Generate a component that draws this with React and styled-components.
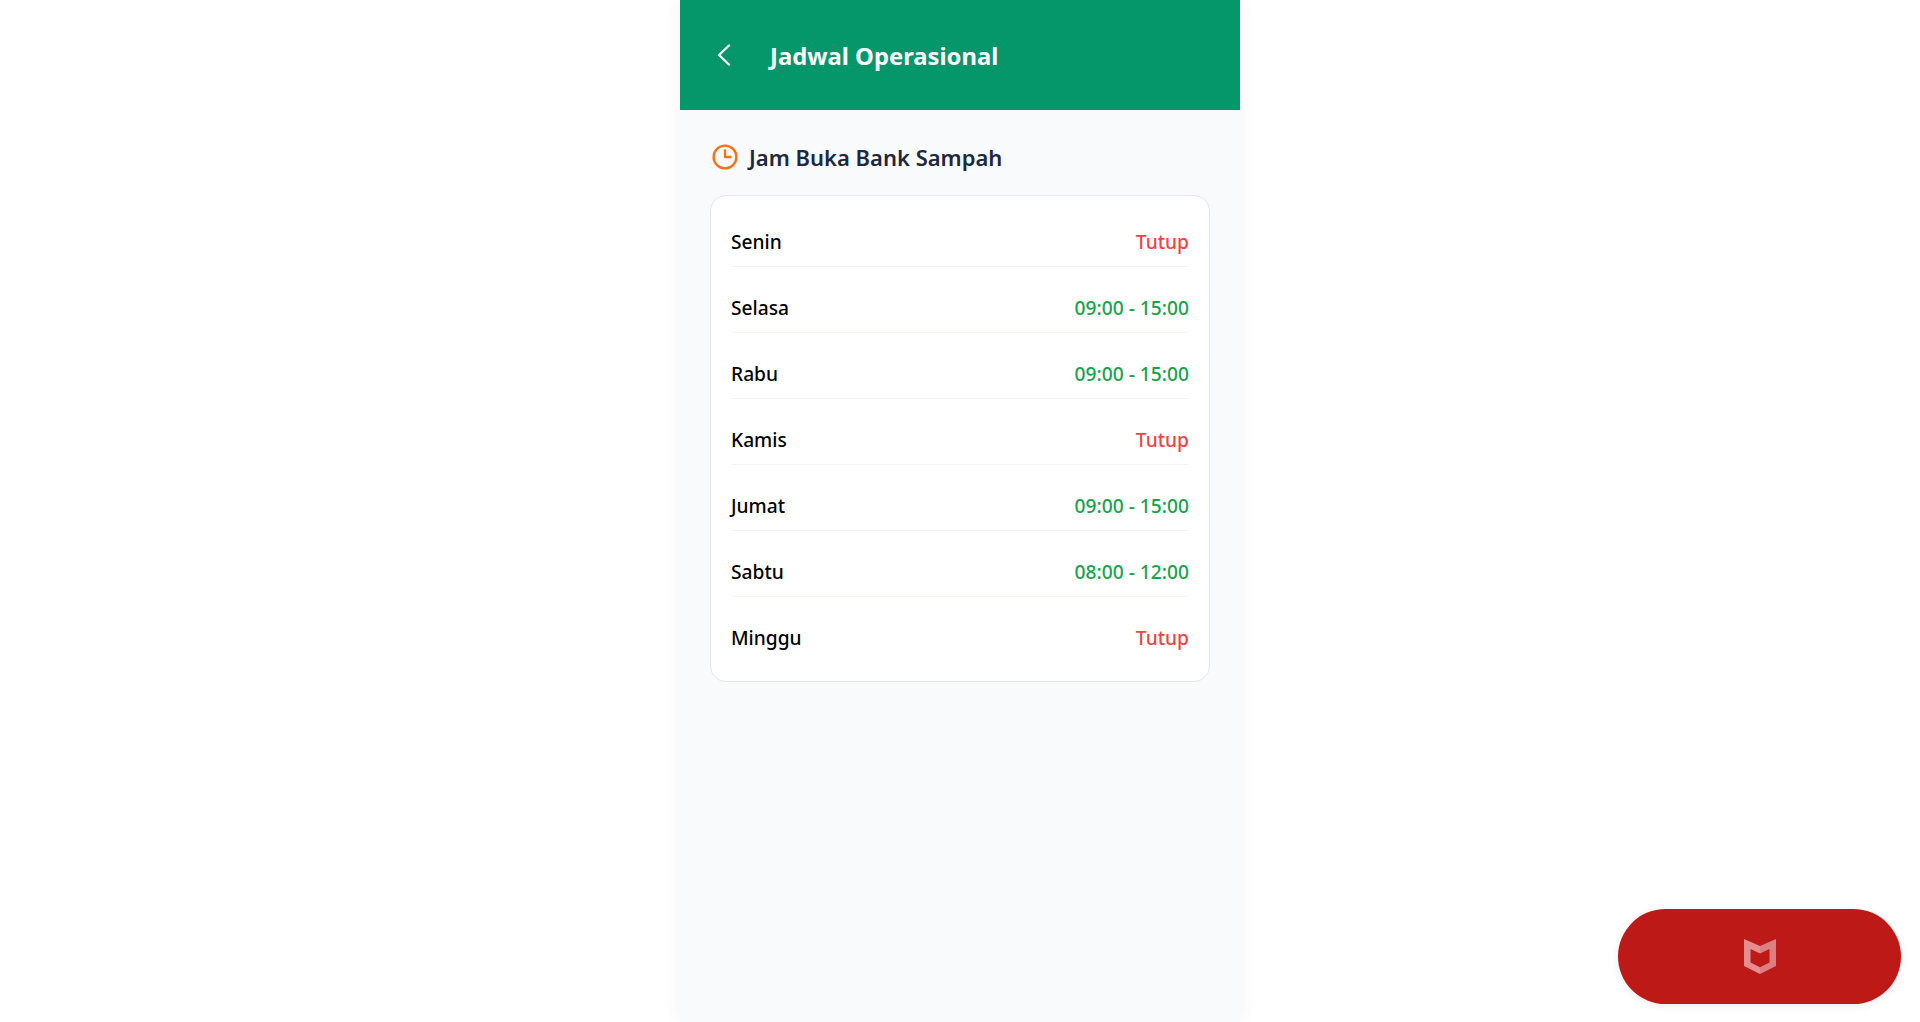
import React from "react";
import styled, { createGlobalStyle } from "styled-components";

const GlobalStyle = createGlobalStyle`
  html, body {
    margin: 0;
    padding: 0;
    background: #ffffff;
    font-family: "Noto Sans", "Open Sans", "Liberation Sans", sans-serif;
  }
  * { box-sizing: border-box; }
`;

const Phone = styled.div`
  width: 560px;
  min-height: 100vh;
  margin: 0 auto;
  background: #f9fafb;
  box-shadow: 0 0 20px rgba(0, 0, 0, 0.05);
`;

const Header = styled.header`
  height: 110px;
  background: #059669;
  display: flex;
  align-items: center;
  padding: 0 32px;
  gap: 34px;
  color: #ffffff;
`;

const BackButton = styled.button`
  width: 24px;
  height: 24px;
  padding: 0;
  border: 0;
  background: none;
  color: inherit;
  display: flex;
  align-items: center;
  justify-content: center;
`;

const Title = styled.h1`
  margin: 4px 0 0;
  font-size: 23.8px;
  font-weight: 700;
  line-height: 1.5;
`;

const Content = styled.main`
  padding: 32px 30px;
`;

const SectionTitle = styled.h2`
  margin: 0 0 23px;
  padding-left: 2px;
  display: flex;
  align-items: center;
  gap: 11px;
  font-size: 22px;
  font-weight: 600;
  line-height: 30px;
  color: #1e293b;
`;

const Card = styled.section`
  background: #ffffff;
  border: 1px solid #e2e8f0;
  border-radius: 16px;
  padding: 20px 20px 19px;
`;

const Row = styled.div`
  display: flex;
  align-items: center;
  justify-content: space-between;
  font-size: 19.2px;
  line-height: 26px;
  padding: 13px 0 11px;
  margin-bottom: ${(p) => (p.$last ? "0" : "15px")};
  border-bottom: ${(p) => (p.$last ? "0" : "1px solid #f1f5f9")};
`;

const Day = styled.span`
  font-weight: 500;
  color: #000000;
`;

const Hours = styled.span`
  font-weight: 500;
  color: ${(p) => (p.$closed ? "#ef4444" : "#16a34a")};
`;

const Badge = styled.div`
  position: fixed;
  right: 19px;
  bottom: 18px;
  width: 283px;
  height: 95px;
  border-radius: 48px;
  background: #bd1a17;
  box-shadow: 0 2px 8px rgba(0, 0, 0, 0.08);
  display: flex;
  align-items: center;
  justify-content: center;
`;

const schedule = [
  ["Senin", "Tutup"],
  ["Selasa", "09:00 - 15:00"],
  ["Rabu", "09:00 - 15:00"],
  ["Kamis", "Tutup"],
  ["Jumat", "09:00 - 15:00"],
  ["Sabtu", "08:00 - 12:00"],
  ["Minggu", "Tutup"],
];

function ClockIcon() {
  return (
    <svg width="26" height="26" viewBox="0 0 24 24" fill="none" stroke="#f97316" strokeWidth="2.2" strokeLinecap="round" strokeLinejoin="round">
      <circle cx="12" cy="12" r="10.5" />
      <path d="M12 6v6h5" />
    </svg>
  );
}

function BackIcon() {
  return (
    <svg width="14" height="22" viewBox="0 0 14 22" fill="none" stroke="#ffffff" strokeWidth="2.3" strokeLinecap="round" strokeLinejoin="round">
      <path d="M12 1.500 2 11l10 9.500" />
    </svg>
  );
}

function ShieldLogo() {
  return (
    <svg width="32" height="35" viewBox="0 0 32 35">
      <path fill="#e58d90" d="M0 0l16 7v7.500L6.500 10v13.500l9.500 4.700V35L0 27z" />
      <path fill="#dc7f83" d="M32 0L16 7v7.500L25.500 10v13.500L16 28.200V35l16-8z" />
    </svg>
  );
}

export default function App() {
  return (
    <>
      <GlobalStyle />
      <Phone>
        <Header>
          <BackButton>
            <BackIcon />
          </BackButton>
          <Title>Jadwal Operasional</Title>
        </Header>
        <Content>
          <SectionTitle>
            <ClockIcon />
            Jam Buka Bank Sampah
          </SectionTitle>
          <Card>
            {schedule.map(([day, hours], i) => (
              <Row key={day} $last={i === schedule.length - 1}>
                <Day>{day}</Day>
                <Hours $closed={hours === "Tutup"}>{hours}</Hours>
              </Row>
            ))}
          </Card>
        </Content>
      </Phone>
      <Badge>
        <ShieldLogo />
      </Badge>
    </>
  );
}
